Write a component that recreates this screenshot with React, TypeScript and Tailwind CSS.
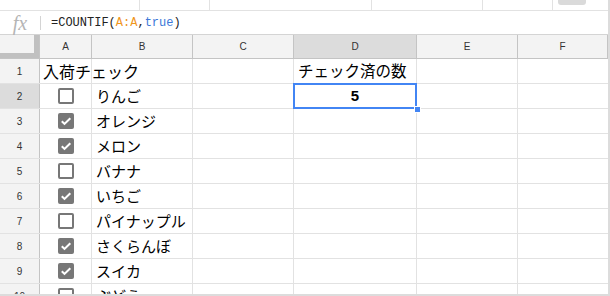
const cols = [
  { key: "A", w: "w-[52px]" },
  { key: "B", w: "w-[101px]" },
  { key: "C", w: "w-[101px]" },
  { key: "D", w: "w-[123px]" },
  { key: "E", w: "w-[101px]" },
  { key: "F", w: "flex-1" },
];

const rows: { n: number; check?: boolean | null; b?: string }[] = [
  { n: 1 },
  { n: 2, check: false, b: "りんご" },
  { n: 3, check: true, b: "オレンジ" },
  { n: 4, check: true, b: "メロン" },
  { n: 5, check: false, b: "バナナ" },
  { n: 6, check: true, b: "いちご" },
  { n: 7, check: false, b: "パイナップル" },
  { n: 8, check: true, b: "さくらんぼ" },
  { n: 9, check: true, b: "スイカ" },
  { n: 10, check: false, b: "ぶどう" },
];

const jp = "font-['Noto_Sans_CJK_JP',sans-serif]";

function CheckBox({ on }: { on: boolean }) {
  if (on) {
    return (
      <div className="w-[16px] h-[16px] rounded-[2px] bg-[#777] flex items-center justify-center">
        <svg width="12" height="12" viewBox="0 0 12 12">
          <path d="M1.8 6.3l2.7 2.6L10.3 3.2" fill="none" stroke="#fff" strokeWidth="2.1" />
        </svg>
      </div>
    );
  }
  return <div className="w-[16px] h-[16px] rounded-[2px] border-2 border-[#777] bg-white" />;
}

export default function App() {
  return (
    <div className="w-[610px] h-[296px] bg-[#dcdcdc] font-['Liberation_Sans',sans-serif]">
      <div className="w-[608px] h-[294px] bg-white overflow-hidden flex flex-col">
        {/* toolbar remnant */}
        <div className="h-[11px] shrink-0 flex border-b border-[#e2e2e2] relative">
          <div className="w-[140px] border-r border-[#e2e2e2]" />
          <div className="w-[70px] border-r border-[#e2e2e2]" />
          <div className="w-[162px] border-r border-[#e2e2e2]" />
          <div className="w-[111px] border-r border-[#e2e2e2]" />
          <div className="w-[70px] border-r border-[#e2e2e2]" />
          <div className="absolute left-[558px] top-0 w-[28px] h-[5px] rounded-b-[3px] bg-[#dadada]" />
        </div>

        {/* formula bar */}
        <div className="h-[24px] shrink-0 flex items-center border-b border-[#d4d4d4]">
          <div className="w-[40px] h-full flex items-center justify-center">
            <span className="font-['Liberation_Serif',serif] italic text-[20px] text-[#b5b5b5] leading-none">fx</span>
          </div>
          <div className="w-px h-[14px] bg-[#d4d4d4]" />
          <div className="pl-[10px] font-['Liberation_Mono',monospace] text-[12px] text-[#222]">
            =COUNTIF(<span className="text-[#f0961c]">A:A</span>,<span className="text-[#3c78d8]">true</span>)
          </div>
        </div>

        {/* column headers */}
        <div className="h-[24px] shrink-0 flex bg-[#f3f3f3] border-b border-[#c4c4c4] text-[10px] text-[#333]">
          <div className="w-[40px] relative border-r border-[#c4c4c4]">
            <div className="absolute right-0 top-0 w-[5px] h-full bg-[#c0c0c0]" />
            <div className="absolute left-0 bottom-0 w-full h-[5px] bg-[#c0c0c0]" />
          </div>
          {cols.map((c) => (
            <div
              key={c.key}
              className={`${c.w} flex items-center justify-center border-r border-[#c4c4c4] ${c.key === "D" ? "bg-[#dcdcdc]" : ""}`}
            >
              {c.key}
            </div>
          ))}
        </div>

        {/* rows */}
        {rows.map((r) => (
          <div key={r.n} className="h-[25px] shrink-0 flex border-b border-[#e2e2e2]">
            <div
              className={`w-[40px] flex items-center justify-center text-[10px] text-[#333] border-r border-[#c4c4c4] ${r.n === 2 ? "bg-[#dcdcdc]" : "bg-[#f3f3f3]"}`}
            >
              {r.n}
            </div>
            <div className="w-[52px] flex items-center justify-center border-r border-[#e2e2e2]">
              {r.n === 1 ? null : <CheckBox on={!!r.check} />}
            </div>
            <div className={`w-[101px] flex items-center pl-[4px] border-r border-[#e2e2e2] text-[15px] text-black whitespace-nowrap ${jp}`}>
              {r.n === 1 ? <span className="-ml-[53px] text-[16px]">入荷チェック</span> : r.b}
            </div>
            <div className="w-[101px] border-r border-[#e2e2e2]" />
            <div className="w-[123px] relative flex items-center border-r border-[#e2e2e2]">
              {r.n === 1 && <span className={`pl-[4px] text-[15.5px] text-black whitespace-nowrap ${jp}`}>チェック済の数</span>}
              {r.n === 2 && (
                <>
                  <div className="absolute -left-px -top-px -right-px -bottom-px border-2 border-[#4285f4] z-10" />
                  <div className="absolute -right-[5px] -bottom-[5px] w-[7px] h-[7px] bg-[#4285f4] border border-white z-20" />
                  <span className="w-full text-center font-bold text-[15px] text-black">5</span>
                </>
              )}
            </div>
            <div className="w-[101px] border-r border-[#e2e2e2]" />
            <div className="flex-1" />
          </div>
        ))}
      </div>
    </div>
  );
}
